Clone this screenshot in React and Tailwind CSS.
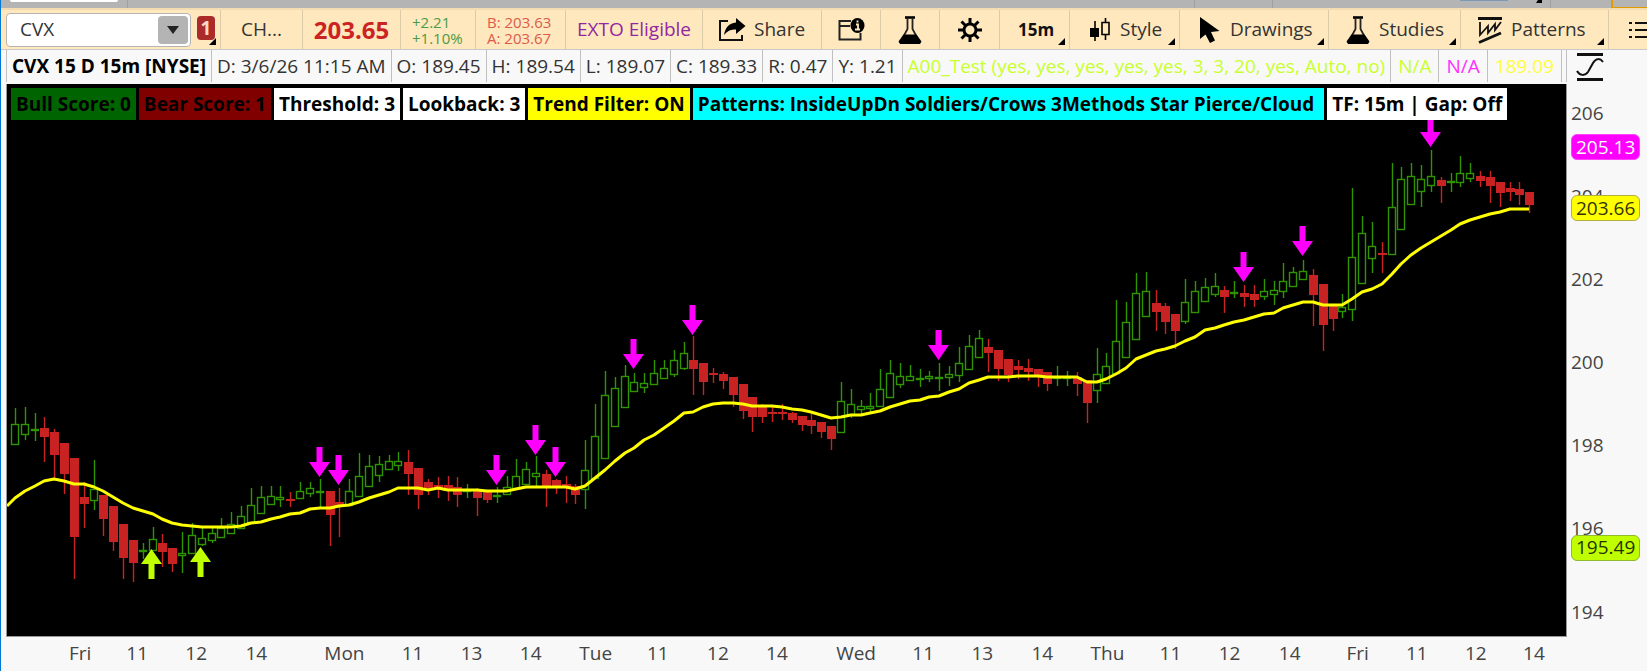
// [direction, high, body top, body bottom, low] in canvas units
const candles = [
  ['u', 408, 424, 445, 445], ['u', 407, 424, 435, 440], ['u', 413, 429, 430, 441], ['d', 417, 428, 437, 462],
  ['d', 429, 432, 455, 479], ['d', 443, 443, 474, 494], ['d', 458, 458, 537, 579], ['d', 482, 497, 504, 528],
  ['u', 460, 489, 501, 510], ['d', 495, 495, 519, 536], ['d', 506, 506, 542, 551], ['d', 524, 524, 558, 579],
  ['d', 540, 540, 563, 582], ['u', 543, 550, 551, 559], ['u', 527, 539, 551, 551], ['d', 534, 543, 552, 567],
  ['d', 548, 548, 564, 572], ['u', 532, 553, 556, 573], ['u', 523, 535, 554, 554], ['u', 527, 538, 545, 546],
  ['u', 527, 533, 541, 543], ['u', 518, 528, 538, 538], ['u', 512, 524, 534, 534], ['u', 506, 516, 529, 529],
  ['u', 488, 505, 523, 523], ['u', 486, 497, 514, 514], ['u', 486, 496, 505, 505], ['u', 486, 497, 500, 507],
  ['d', 492, 499, 500, 507], ['u', 482, 491, 499, 499], ['u', 482, 488, 494, 497], ['u', 479, 491, 492, 509],
  ['d', 491, 491, 515, 546], ['d', 488, 502, 506, 537], ['u', 479, 491, 506, 506], ['u', 453, 476, 497, 497],
  ['u', 455, 466, 487, 487], ['u', 456, 464, 476, 482], ['u', 455, 461, 470, 470], ['u', 452, 461, 466, 471],
  ['d', 450, 462, 474, 495], ['d', 468, 468, 495, 509], ['d', 479, 482, 489, 495], ['d', 477, 485, 489, 498],
  ['d', 476, 485, 491, 501], ['d', 477, 487, 495, 507], ['u', 484, 490, 491, 498], ['d', 488, 491, 498, 516],
  ['d', 492, 492, 500, 503], ['u', 487, 495, 496, 503], ['u', 476, 487, 495, 495], ['u', 459, 476, 489, 489],
  ['u', 462, 469, 485, 485], ['u', 456, 473, 477, 487], ['d', 470, 474, 486, 507], ['d', 479, 480, 486, 494],
  ['d', 476, 484, 488, 503], ['d', 484, 486, 495, 504], ['u', 440, 470, 490, 509], ['u', 404, 436, 479, 479],
  ['u', 371, 395, 459, 459], ['u', 377, 388, 427, 427], ['u', 365, 376, 408, 408], ['u', 373, 382, 392, 392],
  ['u', 373, 383, 388, 393], ['u', 360, 373, 385, 385], ['u', 360, 368, 379, 379], ['u', 350, 360, 375, 377],
  ['u', 342, 353, 369, 370], ['d', 336, 360, 369, 395], ['d', 363, 363, 382, 395], ['d', 368, 373, 374, 383],
  ['d', 372, 374, 381, 389], ['d', 377, 377, 395, 407], ['d', 384, 384, 411, 419], ['d', 397, 397, 417, 432],
  ['d', 404, 407, 417, 423], ['d', 405, 412, 414, 422], ['d', 404, 412, 414, 420], ['d', 412, 413, 420, 423],
  ['d', 416, 416, 425, 431], ['d', 414, 420, 426, 434], ['d', 422, 422, 432, 438], ['d', 426, 426, 439, 450],
  ['u', 382, 401, 433, 433], ['u', 389, 404, 415, 418], ['u', 400, 406, 410, 416], ['u', 393, 406, 409, 413],
  ['u', 369, 389, 407, 407], ['u', 360, 373, 398, 398], ['u', 363, 376, 385, 388], ['u', 365, 376, 381, 381],
  ['u', 369, 378, 379, 387], ['u', 371, 376, 379, 382], ['u', 363, 377, 378, 391], ['u', 366, 374, 378, 386],
  ['u', 347, 363, 376, 382], ['u', 335, 346, 370, 370], ['u', 330, 338, 358, 358], ['d', 339, 347, 353, 372],
  ['d', 350, 350, 369, 381], ['d', 359, 359, 375, 382], ['d', 360, 366, 370, 379], ['d', 359, 368, 372, 381],
  ['d', 369, 369, 376, 387], ['d', 372, 372, 384, 391], ['u', 366, 377, 378, 386], ['u', 371, 377, 378, 386],
  ['d', 372, 377, 384, 396], ['d', 380, 380, 403, 423], ['u', 348, 374, 391, 403], ['u', 353, 366, 384, 384],
  ['u', 300, 341, 374, 374], ['u', 302, 322, 358, 358], ['u', 273, 293, 340, 340], ['u', 272, 291, 317, 317],
  ['d', 290, 303, 312, 331], ['d', 303, 306, 322, 334], ['d', 314, 314, 331, 349], ['u', 279, 302, 322, 324],
  ['u', 281, 291, 313, 313], ['u', 278, 287, 302, 302], ['u', 273, 286, 295, 297], ['d', 286, 290, 297, 313],
  ['u', 281, 292, 293, 298], ['d', 285, 293, 297, 307], ['d', 285, 294, 300, 307], ['u', 279, 291, 297, 300],
  ['u', 281, 290, 295, 305], ['u', 263, 281, 292, 298], ['u', 267, 272, 287, 287], ['u', 260, 271, 280, 280],
  ['d', 269, 275, 295, 326], ['d', 284, 284, 325, 351], ['d', 305, 305, 319, 331], ['u', 294, 307, 312, 318],
  ['u', 188, 257, 310, 321], ['u', 216, 233, 284, 284], ['u', 222, 246, 259, 273], ['d', 242, 253, 254, 273],
  ['u', 163, 207, 255, 255], ['u', 167, 179, 230, 230], ['u', 163, 176, 205, 205], ['u', 165, 179, 192, 207],
  ['u', 150, 176, 186, 192], ['d', 177, 180, 186, 203], ['u', 173, 181, 182, 192], ['u', 156, 173, 183, 187],
  ['u', 163, 173, 179, 182], ['d', 171, 176, 181, 187], ['d', 171, 177, 186, 203], ['d', 182, 182, 193, 207],
  ['d', 182, 188, 192, 201], ['d', 182, 189, 195, 205], ['d', 192, 192, 205, 213],
]

const average = [
  498, 491, 486, 481, 479, 481, 484, 484, 487, 491, 497, 503, 508, 511, 514, 519, 523, 525, 526, 527,
  527, 527, 527, 526, 523, 522, 519, 517, 514, 513, 509, 508, 508, 506, 505, 502, 498, 495, 492, 488,
  488, 488, 490, 488, 490, 490, 490, 490, 491, 491, 491, 489, 487, 487, 487, 487, 487, 489, 486, 478,
  470, 461, 453, 448, 440, 435, 428, 421, 413, 412, 407, 404, 403, 403, 404, 406, 406, 406, 407, 409,
  410, 412, 415, 418, 417, 415, 415, 413, 411, 407, 404, 401, 400, 397, 396, 392, 389, 383, 380, 377,
  377, 377, 376, 376, 376, 377, 377, 377, 377, 382, 382, 379, 374, 368, 359, 355, 351, 349, 346, 341,
  337, 330, 328, 325, 322, 320, 317, 314, 313, 308, 305, 302, 302, 305, 305, 305, 299, 292, 289, 284,
  274, 264, 255, 248, 242, 236, 230, 224, 220, 217, 214, 212, 209, 209, 209,
]

// [bar index, tip y]
const bearSignals = [
  [31, 477], [33, 485], [49, 485], [53, 455], [55, 477], [63, 369], [69, 335], [94, 360], [125, 282], [131, 256], [144, 147],
]
const bullSignals = [[14, 550], [19, 548]]

const times = [
  ['Fri', 81], ['11', 138], ['12', 197], ['14', 257], ['Mon', 345], ['11', 413], ['13', 472], ['14', 531],
  ['Tue', 596], ['11', 658], ['12', 718], ['14', 777], ['Wed', 856], ['11', 923], ['13', 982], ['14', 1042],
  ['Thu', 1107], ['11', 1170], ['12', 1229], ['14', 1289], ['Fri', 1357], ['11', 1416], ['12', 1475], ['14', 1533],
]

const readings = [
  'D: 3/6/26 11:15 AM', 'O: 189.45', 'H: 189.54', 'L: 189.07', 'C: 189.33', 'R: 0.47', 'Y: 1.21',
]

const badges = [
  { text: 'Bull Score: 0', style: 'bg-[#006400]' },
  { text: 'Bear Score: 1', style: 'bg-[#800000]' },
  { text: 'Threshold: 3', style: 'bg-white' },
  { text: 'Lookback: 3', style: 'bg-white' },
  { text: 'Trend Filter: ON', style: 'bg-[#ffff00]' },
  { text: 'Patterns: InsideUpDn Soldiers/Crows 3Methods Star Pierce/Cloud ', style: 'bg-[#00ffff]' },
  { text: 'TF: 15m | Gap: Off', style: 'bg-white' },
]

const LEFT = 7
const TOP = 84
const WIDTH = 1559
const HEIGHT = 552

const barX = (i) => Math.round(15 + i * 9.833)
const priceTop = (price) => `${((206 - price) * 41.5 + 112.6 - TOP) / HEIGHT * 100}%`

const Corner = () => (
  <svg className="absolute right-1 bottom-1 size-[7px]" viewBox="0 0 7 7">
    <path d="M7 0v7H0z" />
  </svg>
)

const ShareIcon = () => (
  <svg className="w-7 h-6" viewBox="0 0 28 24">
    <path d="M10 3H2v19h22v-5" fill="none" stroke="#111" strokeWidth="2" />
    <path d="M18 0l9.500 8L18 16v-4.500c-5 0-8 1-12 5.500 1-7 5-12 12-12.500z" />
  </svg>
)

const Flask = () => (
  <svg className="w-6 h-7 shrink-0" viewBox="0 0 24 28">
    <path d="M7 1.500h10" stroke="#000" strokeWidth="2.600" />
    <path d="M9.500 2v11L3 25h18l-6.500-12V2" fill="none" stroke="#222" strokeWidth="1.800" />
    <path d="M5.500 18.500h13l5 7-1.500 2.500H2L.5 25.500z" />
  </svg>
)

const Gear = () => (
  <svg className="size-6" viewBox="0 0 24 24">
    <circle cx="12" cy="12" r="6" fill="none" stroke="#000" strokeWidth="3" />
    <path
      d="M12 0v6M12 18v6M0 12h6M18 12h6M3.500 3.500l4 4M16.500 16.500l4 4M20.500 3.500l-4 4M7.500 16.500l-4 4"
      stroke="#000"
      strokeWidth="3"
    />
  </svg>
)

const NewsIcon = () => (
  <svg className="w-7 h-6" viewBox="0 0 28 24">
    <path d="M14 3H2.500v18.500h21V15M2 8h11" fill="none" stroke="#222" strokeWidth="2" />
    <ellipse cx="20.500" cy="7.500" rx="7" ry="7.500" />
    <path d="M19 6.500h2V11M18 11.500h5M20.500 2.500v2" fill="none" stroke="#ffe8bd" strokeWidth="1.800" />
  </svg>
)

const CandleIcon = () => (
  <svg className="w-5 h-6" viewBox="0 0 20 24">
    <path d="M5 3v20M15.500 0v4M15.500 17v5" stroke="#000" strokeWidth="1.600" />
    <path d="M0 10h9v9H0z" />
    <path d="M12 4.500h7v12h-7z" fill="none" stroke="#000" strokeWidth="1.600" />
  </svg>
)

const CursorIcon = () => (
  <svg className="w-5 h-[26px]" viewBox="0 0 20 26">
    <path d="M0 0v22l5.500-4.500L10 26l5-2.500-4-8.500 8.500-1z" />
  </svg>
)

const PatternIcon = () => (
  <svg className="w-6 h-7" viewBox="0 0 24 28" fill="none" stroke="#111">
    <path d="M0 2.500h24M1 26.500L23 17" strokeWidth="2.800" />
    <path d="M2 6v13l8-9v7l7-9v6l6-8" strokeWidth="1.800" />
  </svg>
)

const Tool = ({ className = '', label, menu, children }) => (
  <button
    aria-label={label}
    className={`relative flex items-center shrink-0 border-r border-[#dccba9] ${className}`}
  >
    {children}
    {menu && <Corner />}
  </button>
)

const Toolbar = () => (
  <header className="flex h-[41px] bg-[#ffe8bd] border-t-2 border-[#f3dcb2] pl-[5px] text-[19px] text-[#333] overflow-hidden">
    <div className="flex items-center w-[215px] shrink-0 border-r border-[#dccba9]">
      <div className="flex items-center w-[185px] h-[34px] bg-white border border-[#b5b5b5] rounded-sm p-px">
        <input
          aria-label="Symbol"
          defaultValue="CVX"
          className="w-0 grow pl-3 bg-transparent outline-none"
        />
        <button aria-label="Symbol list" className="flex items-center justify-center w-[30px] h-7 mr-px bg-[#b4b4b4] rounded-sm">
          <svg className="w-3 h-2" viewBox="0 0 12 8"><path d="M0 0h12L6 8z" fill="#222" /></svg>
        </button>
      </div>
      <button aria-label="Link group 1" className="relative ml-[6px] w-[19px] h-[30px] flex items-start">
        <span className="w-[18px] h-6 mt-px bg-[#ab2b2b] rounded-sm text-[#ffd9c8] font-bold leading-6 text-center">1</span>
        <svg className="absolute right-0 bottom-0 size-[7px]" viewBox="0 0 7 7"><path d="M7 0v7H0z" /></svg>
      </button>
    </div>
    <Tool className="w-[82px] justify-center">CH...</Tool>
    <div className="w-[98px] shrink-0 flex items-center justify-center border-r border-[#dccba9] text-2xl font-bold text-[#cb2323]">203.65</div>
    <div className="w-[75px] shrink-0 pl-[11px] flex flex-col justify-center border-r border-[#dccba9] text-[15px] leading-4 text-[#4c9b45]">
      <span>+2.21</span>
      <span>+1.10%</span>
    </div>
    <div className="w-[90px] shrink-0 pl-[11px] flex flex-col justify-center border-r border-[#dccba9] text-[15px] leading-4 text-[#dc5a4c]">
      <span>B: 203.63</span>
      <span>A: 203.67</span>
    </div>
    <div className="w-[137px] shrink-0 flex items-center justify-center border-r border-[#dccba9] text-[#9326a3]">EXTO Eligible</div>
    <Tool className="w-[119px] pl-[15px] gap-2"><ShareIcon />Share</Tool>
    <Tool className="w-[59px] justify-center" label="News"><NewsIcon /></Tool>
    <Tool className="w-[59px] justify-center" label="Studies"><Flask /></Tool>
    <Tool className="w-[60px] justify-center" label="Settings"><Gear /></Tool>
    <Tool className="w-[70px] pl-[18px] font-bold text-[17px] text-[#111]" menu>15m</Tool>
    <Tool className="w-[110px] pl-5 gap-[10px]" menu><CandleIcon />Style</Tool>
    <Tool className="w-[149px] pl-5 gap-[10px]" menu><CursorIcon />Drawings</Tool>
    <Tool className="w-[132px] pl-[17px] gap-[9px]" menu><Flask />Studies</Tool>
    <Tool className="w-[148px] pl-[17px] gap-[9px]" menu><PatternIcon />Patterns</Tool>
    <button aria-label="More" className="pl-5 shrink-0">
      <svg className="w-6 h-5" viewBox="0 0 24 20" stroke="#111" strokeWidth="2">
        <path d="M0 3h3M0 10h3M0 17h3M6 3h18M6 10h18M6 17h18" />
      </svg>
    </button>
  </header>
)

const cell = 'flex items-center border-r border-[#c0c0c0] whitespace-pre'

const InfoBar = () => (
  <div className="flex h-8 bg-[#f8f8f8] border-l border-[#c0c0c0] text-[19px] text-[#333] overflow-hidden">
    <h1 className={`${cell} px-[5px] font-bold text-black`}>CVX 15 D 15m [NYSE]</h1>
    {readings.map((text) => <span key={text} className={`${cell} px-[5px]`}>{text}</span>)}
    <span className={`${cell} px-[5px] text-[#c8ff2e]`}>A00_Test (yes, yes, yes, yes, yes, 3, 3, 20, yes, Auto, no)</span>
    <span className={`${cell} px-[7px] text-[#c8ff2e]`}>N/A</span>
    <span className={`${cell} px-[7px] text-[#ff30ff]`}>N/A</span>
    <span className={`${cell} px-[7px] text-[#ffff40]`}>189.09</span>
    <span className="grow border-r border-[#c0c0c0]" />
  </div>
)

const Candle = ({ index, data }) => {
  const [dir, high, top, bottom, low] = data
  const x = barX(index)
  if (dir === 'd') {
    return (
      <g fill="#c92222">
        <rect x={x - 0.2} y={high} width="1.4" height={low - high} />
        <rect x={x - 4} y={top} width="9" height={Math.max(bottom - top, 2)} />
      </g>
    )
  }
  return (
    <g stroke="#2f9400" strokeWidth="1.400" fill="none">
      <path d={`M${x + 0.5} ${high}V${top}M${x + 0.5} ${bottom}V${low}`} />
      <rect x={x - 3.5} y={top + 0.5} width="7" height={Math.max(bottom - top - 1, 1)} />
    </g>
  )
}

const Plot = () => (
  <svg
    className="absolute inset-0 w-full h-full"
    viewBox={`${LEFT} ${TOP} ${WIDTH} ${HEIGHT}`}
    preserveAspectRatio="none"
  >
    {candles.map((data, i) => <Candle key={i} index={i} data={data} />)}
    <polyline
      points={`7,506 ${average.map((y, i) => `${barX(i)},${y}`).join(' ')}`}
      fill="none"
      stroke="#ffff00"
      strokeWidth="3"
      strokeLinejoin="round"
    />
    {bearSignals.map(([i, y]) => (
      <path key={i} d={`M${barX(i) - 0.5} ${y}l-10.500-15h7.500v-15h6v15h7.500z`} fill="#ff00ff" />
    ))}
    {bullSignals.map(([i, y]) => (
      <path key={i} d={`M${barX(i) - 1.5} ${y - 1}l-10.500 15h7.500v15h6v-15h7.500z`} fill="#bfff00" />
    ))}
  </svg>
)

const PriceTag = ({ price, className }) => (
  <span
    className={`absolute left-1 -mt-[2px] -translate-y-1/2 h-[26px] px-1 flex items-center border rounded-md ${className}`}
    style={{ top: priceTop(price) }}
  >
    {price}
  </span>
)

const PriceAxis = () => (
  <aside className="relative text-[19px] text-[#444]">
    {[206, 204, 202, 200, 198, 196, 194].map((price) => (
      <span key={price} className="absolute left-1 -translate-y-1/2" style={{ top: priceTop(price) }}>{price}</span>
    ))}
    <PriceTag price={205.13} className="bg-[#ff00ff] border-[#ff40ff] text-white" />
    <PriceTag price={203.66} className="bg-[#ffff00] border-[#b0b040] text-[#333300]" />
    <PriceTag price={195.49} className="bg-[#bfff00] border-[#90b830] text-[#263300]" />
  </aside>
)

const App = () => (
  <div
    className="h-screen min-h-[400px] flex flex-col overflow-hidden bg-[#f8f8f8] border-l border-[#0078d7]"
    style={{ fontFamily: '"Open Sans", "Noto Sans", sans-serif' }}
  >
    <div className="flex h-2 shrink-0 bg-[#b4b4b4]">
      <div className="ml-[9px] w-[108px] h-[2px] bg-white rounded-b-sm" />
      <div className="w-[10px] border-r border-[#a0a0a0]" />
      <div className="grow border-r border-[#a0a0a0]" />
      <div className="w-[78px] border-r border-[#a0a0a0]" />
      <div className="w-[278px] flex justify-end gap-7 pr-2 border-r border-[#a0a0a0]">
        <div className="w-12 h-px bg-[#7d9ab5]" />
        <svg className="w-[6px] h-[3px]" viewBox="0 0 6 3"><path d="M2 0h4v3H0z" /></svg>
      </div>
      <div className="w-[60px]" />
      <div className="w-9 border-l-2 border-b border-[#e39a00]" />
    </div>
    <Toolbar />
    <div className="grid grid-cols-[1fr_80px] grid-rows-[34px_1fr_34px] grow min-h-0 pl-[5px] border-t border-[#c8c8c8]">
      <InfoBar />
      <button aria-label="Fit scale" className="pl-[9px]">
        <svg className="w-7 h-[30px]" viewBox="0 0 28 30" fill="none" stroke="#111">
          <path d="M1 2.500h26M1 27.500h26" strokeWidth="3" />
          <path d="M1 19c3 5 8 5 11 1l5-9c3-5 7-5 10-1" strokeWidth="2" />
        </svg>
      </button>
      <main className="relative bg-black border-l border-r border-b border-[#999]">
        <Plot />
        <div className="absolute top-1 left-1 flex gap-[3px] text-[19px] font-bold leading-8 text-black whitespace-pre">
          {badges.map(({ text, style }) => (
            <span key={text} className={`h-8 px-[5px] ${style}`}>{text}</span>
          ))}
        </div>
      </main>
      <PriceAxis />
      <footer className="relative text-[19px] text-[#444]">
        {times.map(([text, x]) => (
          <span
            key={x}
            className="absolute top-[2px] -translate-x-1/2"
            style={{ left: `${(x - LEFT) / WIDTH * 100}%` }}
          >
            {text}
          </span>
        ))}
      </footer>
    </div>
  </div>
)

export default App
